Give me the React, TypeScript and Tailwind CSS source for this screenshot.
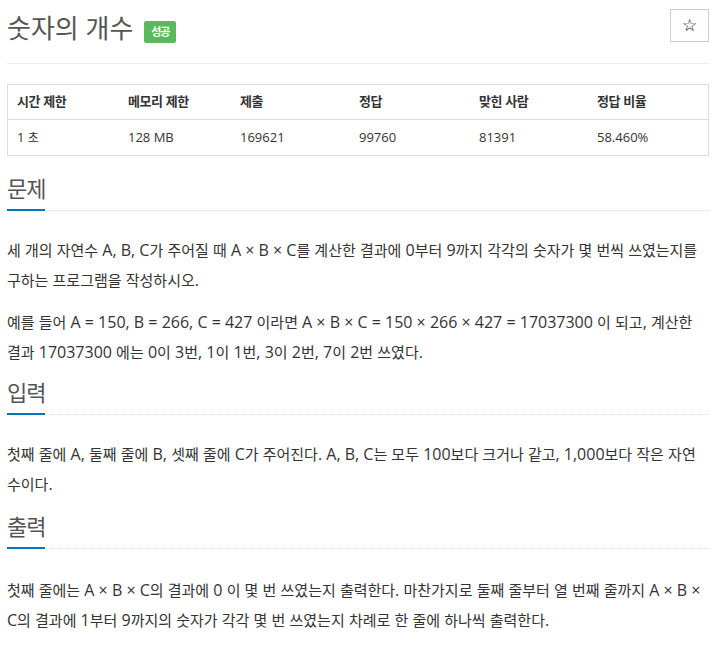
import React from "react";

const HANGUL = /([\uAC00-\uD7A3\u3131-\u318E]+)/;

function T({ t, k }: { t: string; k: string }) {
  const parts = t.split(HANGUL);
  return (
    <>
      {parts.map((s, i) =>
        HANGUL.test(s) ? (
          <span key={i} className={k}>
            {s}
          </span>
        ) : (
          <React.Fragment key={i}>{s}</React.Fragment>
        )
      )}
    </>
  );
}

const BODY_K = "text-[15px]";

function Line({ t }: { t: string }) {
  return (
    <div className="whitespace-nowrap">
      <T t={t} k={BODY_K} />
    </div>
  );
}

function Heading({ title, className }: { title: string; className: string }) {
  return (
    <div className={"flex border-b border-dotted border-[#ddd] " + className}>
      <span className="inline-block -mb-[1px] border-b-[2px] border-[#0076c0] pb-[9px] text-[22px] leading-[24px] tracking-[-1px] text-[#555]">
        {title}
      </span>
    </div>
  );
}

const headers = ["시간 제한", "메모리 제한", "제출", "정답", "맞힌 사람", "정답 비율"];
const values = ["1 초", "128 MB", "169621", "99760", "81391", "58.460%"];

export default function App() {
  return (
    <div className="min-h-[655px] w-[716px] bg-white px-[7px] font-['Open_Sans','Noto_Sans_CJK_KR',sans-serif] text-[#333]">
      <div className="flex h-[64px] items-start justify-between border-b border-[#eee]">
        <div className="mt-[8px] flex h-[40px] items-center gap-[11px]">
          <h1 className="text-[26px] leading-[40px] font-normal text-[#555]">
            <T t="숫자의 개수" k="tracking-[0px]" />
          </h1>
          <span className="mt-[8px] flex h-[22px] w-[32px] items-center justify-center rounded-[2px] bg-[#5cb85c] text-[11px] font-bold text-white">
            <T t="성공" k="tracking-[-1px]" />
          </span>
        </div>
        <button className="mt-[9px] flex h-[33px] w-[39px] items-center justify-center border border-[#ccc] bg-white font-['DejaVu_Sans',sans-serif] text-[17px] text-black">
          ☆
        </button>
      </div>

      <div className="mt-[20px] border border-[#ddd]">
        <div className="grid h-[35px] grid-cols-[111px_112px_119px_120px_118px_1fr] items-center border-b border-[#ddd] text-[13px] font-bold text-[#333]">
          {headers.map((h) => (
            <div key={h} className="pl-[9px]">
              <T t={h} k="tracking-[-0.5px]" />
            </div>
          ))}
        </div>
        <div className="grid h-[35px] grid-cols-[111px_112px_119px_120px_118px_1fr] items-center text-[13px] text-[#333]">
          {values.map((v) => (
            <div key={v} className="pl-[9px]">
              <T t={v} k="text-[12px] tracking-[-0.5px]" />
            </div>
          ))}
        </div>
      </div>

      <Heading title="문제" className="mt-[20px]" />
      <div className="mt-[24px] text-[16px] leading-[30px]">
        <Line t="세 개의 자연수 A, B, C가 주어질 때 A × B × C를 계산한 결과에 0부터 9까지 각각의 숫자가 몇 번씩 쓰였는지를" />
        <Line t="구하는 프로그램을 작성하시오." />
      </div>
      <div className="mt-[12px] text-[16px] leading-[30px]">
        <Line t="예를 들어 A = 150, B = 266, C = 427 이라면 A × B × C = 150 × 266 × 427 = 17037300 이 되고, 계산한" />
        <Line t="결과 17037300 에는 0이 3번, 1이 1번, 3이 2번, 7이 2번 쓰였다." />
      </div>

      <Heading title="입력" className="mt-[13px]" />
      <div className="mt-[24px] text-[16px] leading-[30px]">
        <Line t="첫째 줄에 A, 둘째 줄에 B, 셋째 줄에 C가 주어진다. A, B, C는 모두 100보다 크거나 같고, 1,000보다 작은 자연" />
        <Line t="수이다." />
      </div>

      <Heading title="출력" className="mt-[15px]" />
      <div className="mt-[26px] text-[16px] leading-[30px]">
        <Line t="첫째 줄에는 A × B × C의 결과에 0 이 몇 번 쓰였는지 출력한다. 마찬가지로 둘째 줄부터 열 번째 줄까지 A × B ×" />
        <Line t="C의 결과에 1부터 9까지의 숫자가 각각 몇 번 쓰였는지 차례로 한 줄에 하나씩 출력한다." />
      </div>
    </div>
  );
}
